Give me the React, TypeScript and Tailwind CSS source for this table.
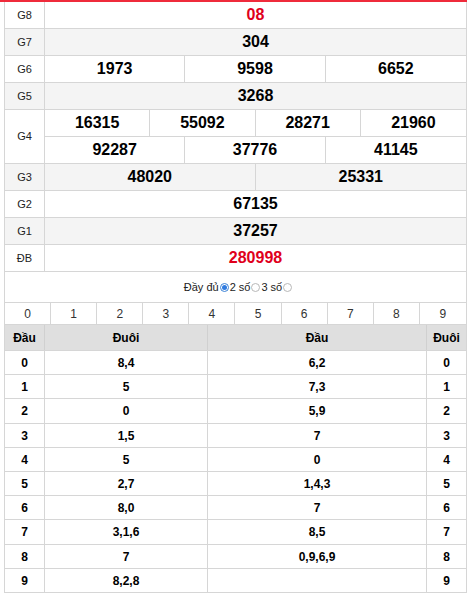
const prizes: { label: string; rows: string[][]; red?: boolean }[] = [
  { label: "G8", rows: [["08"]], red: true },
  { label: "G7", rows: [["304"]] },
  { label: "G6", rows: [["1973", "9598", "6652"]] },
  { label: "G5", rows: [["3268"]] },
  { label: "G4", rows: [["16315", "55092", "28271", "21960"], ["92287", "37776", "41145"]] },
  { label: "G3", rows: [["48020", "25331"]] },
  { label: "G2", rows: [["67135"]] },
  { label: "G1", rows: [["37257"]] },
  { label: "ĐB", rows: [["280998"]], red: true },
];

const cols: Record<number, string> = {
  1: "grid-cols-1",
  2: "grid-cols-2",
  3: "grid-cols-3",
  4: "grid-cols-4",
};

const lotto = [
  { d: "0", tail: "8,4", head: "6,2" },
  { d: "1", tail: "5", head: "7,3" },
  { d: "2", tail: "0", head: "5,9" },
  { d: "3", tail: "1,5", head: "7" },
  { d: "4", tail: "5", head: "0" },
  { d: "5", tail: "2,7", head: "1,4,3" },
  { d: "6", tail: "8,0", head: "7" },
  { d: "7", tail: "3,1,6", head: "8,5" },
  { d: "8", tail: "7", head: "0,9,6,9" },
  { d: "9", tail: "8,2,8", head: "" },
];

const Radio = ({ checked }: { checked?: boolean }) => (
  <span
    className={
      checked
        ? "inline-flex w-[9px] h-[9px] rounded-full border border-[#3b82d6] items-center justify-center mx-[1px]"
        : "inline-block w-[9px] h-[9px] rounded-full border border-[#b8b8b8] mx-[1px]"
    }
  >
    {checked && <span className="w-[5px] h-[5px] rounded-full bg-[#2f7be0]" />}
  </span>
);

export default function App() {
  return (
    <div className="w-[467px] bg-white text-black" style={{ fontFamily: '"Liberation Sans", Arial, sans-serif' }}>
      <div className="h-[2px] bg-[#ef2b3b]" />
      <div className="ml-[4px] border-x border-[#d6d6d6]">
        {/* results */}
        {prizes.map((p, i) => (
          <div
            key={p.label}
            className={`flex border-b border-[#d6d6d6] ${i % 2 === 1 ? "bg-[#f4f4f4]" : "bg-white"}`}
          >
            <div className="w-[40px] shrink-0 border-r border-[#d6d6d6] flex items-center justify-center text-[11px] text-[#222]">
              {p.label}
            </div>
            <div className="flex-1 flex flex-col">
              {p.rows.map((row, ri) => (
                <div
                  key={ri}
                  className={`grid ${cols[row.length]} h-[26px] ${ri < p.rows.length - 1 ? "box-content border-b border-[#d6d6d6]" : ""}`}
                >
                  {row.map((n, ni) => (
                    <div
                      key={ni}
                      className={`flex items-center justify-center text-[16px] font-bold ${
                        ni < row.length - 1 ? "border-r border-[#d6d6d6]" : ""
                      } ${p.red ? "text-[#e0001b]" : "text-black"}`}
                    >
                      {n}
                    </div>
                  ))}
                </div>
              ))}
            </div>
          </div>
        ))}

        {/* mode picker */}
        <div className="h-[30px] flex items-center justify-center text-[11px] text-[#222] pl-[6px]">
          <span>Đầy đủ</span>
          <Radio checked />
          <span>2 số</span>
          <Radio />
          <span>3 số</span>
          <Radio />
        </div>

        {/* digit filter */}
        <div className="grid grid-cols-10 border-t border-b border-[#d6d6d6] h-[23px]">
          {Array.from({ length: 10 }, (_, k) => (
            <div
              key={k}
              className={`flex items-center justify-center text-[12px] text-[#333] ${k < 9 ? "border-r border-[#d6d6d6]" : ""}`}
            >
              {k}
            </div>
          ))}
        </div>

        {/* lotto table */}
        <div className="text-[12px] font-bold">
          <div className="flex h-[26px] bg-[#dfdfdf] border-b border-[#d6d6d6]">
            <div className="w-[40px] border-r border-[#d0d0d0] flex items-center justify-center">Đầu</div>
            <div className="w-[163px] border-r border-[#d0d0d0] flex items-center justify-center">Đuôi</div>
            <div className="w-[219px] border-r border-[#d0d0d0] flex items-center justify-center">Đầu</div>
            <div className="flex-1 flex items-center justify-center">Đuôi</div>
          </div>
          {lotto.map((r, i) => (
            <div
              key={r.d}
              className={`flex border-b border-[#d6d6d6] ${i === 2 || i === 7 ? "h-[25px]" : "h-[24px]"}`}
            >
              <div className="w-[40px] border-r border-[#d6d6d6] flex items-center justify-center">{r.d}</div>
              <div className="w-[163px] border-r border-[#d6d6d6] flex items-center justify-center">{r.tail}</div>
              <div className="w-[219px] border-r border-[#d6d6d6] flex items-center justify-center">{r.head}</div>
              <div className="flex-1 flex items-center justify-center">{r.d}</div>
            </div>
          ))}
        </div>
      </div>
    </div>
  );
}
